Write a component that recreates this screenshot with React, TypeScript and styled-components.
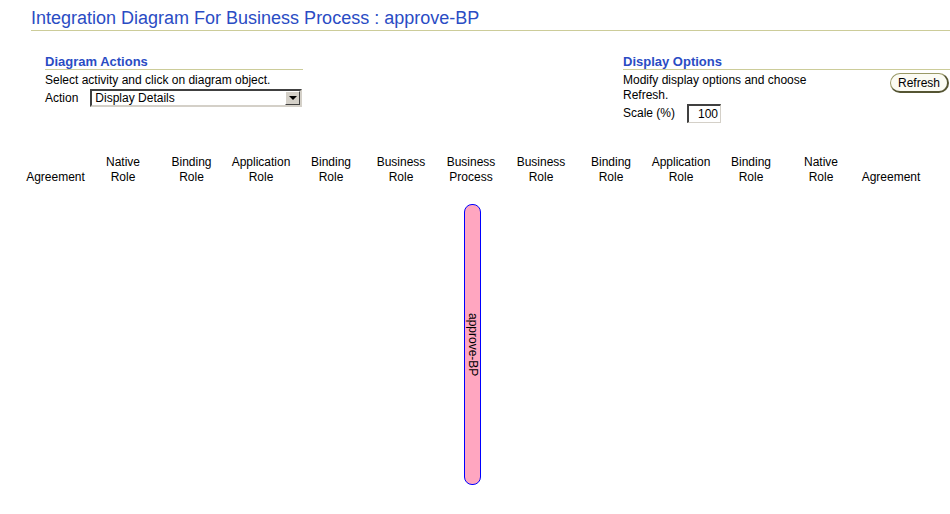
import styled, { createGlobalStyle } from 'styled-components';

const GlobalStyle = createGlobalStyle`
	html, body {
		margin: 0;
		padding: 0;
		background: #ffffff;
	}
	body {
		font-family: 'Liberation Sans', Arial, sans-serif;
		font-size: 12px;
		color: #000000;
	}
`;

const columns = [
	{ top: '', bottom: 'Agreement', width: 67 },
	{ top: 'Native', bottom: 'Role', width: 68 },
	{ top: 'Binding', bottom: 'Role', width: 69 },
	{ top: 'Application', bottom: 'Role', width: 70 },
	{ top: 'Binding', bottom: 'Role', width: 70 },
	{ top: 'Business', bottom: 'Role', width: 70 },
	{ top: 'Business', bottom: 'Process', width: 70, process: 'approve-BP' },
	{ top: 'Business', bottom: 'Role', width: 70 },
	{ top: 'Binding', bottom: 'Role', width: 70 },
	{ top: 'Application', bottom: 'Role', width: 70 },
	{ top: 'Binding', bottom: 'Role', width: 70 },
	{ top: 'Native', bottom: 'Role', width: 70 },
	{ top: '', bottom: 'Agreement', width: 70 },
];

const Page = styled.div`
	width: 950px;
	padding-top: 9px;
`;

const PageTitle = styled.h1`
	margin: 0 0 0 31px;
	padding-bottom: 2px;
	font-size: 18px;
	font-weight: normal;
	line-height: 19px;
	color: #2a4cc4;
	border-bottom: 1px solid #cccc99;
`;

const OptionsRow = styled.div`
	display: flex;
	justify-content: space-between;
	margin-top: 23px;
	padding-left: 45px;
`;

const Section = styled.div<{ $width: number }>`
	width: ${({ $width }) => $width}px;
`;

const SectionHeader = styled.h2`
	margin: 0;
	font-size: 13px;
	font-weight: bold;
	line-height: 15px;
	color: #2a4cc4;
	border-bottom: 1px solid #cccc99;
`;

const HelpText = styled.div`
	margin-top: 3px;
	line-height: 15px;
`;

const FieldRow = styled.div`
	display: flex;
	align-items: center;
	gap: 12px;
	margin-top: 1px;
`;

const Label = styled.span`
	line-height: 15px;
`;

const SelectBox = styled.div`
	display: flex;
	align-items: center;
	width: 208px;
	height: 14px;
	border: 2px solid;
	border-color: #404040 #d4d0c8 #d4d0c8 #404040;
	background: #ffffff;
`;

const SelectValue = styled.span`
	flex: 1;
	padding-left: 3px;
`;

const SelectArrow = styled.span`
	display: flex;
	align-items: center;
	justify-content: center;
	width: 15px;
	height: 14px;
	box-sizing: border-box;
	background: #d4d0c8;
	border: 1px solid;
	border-color: #ffffff #404040 #404040 #ffffff;
	&::after {
		content: '';
		border-left: 4px solid transparent;
		border-right: 4px solid transparent;
		border-top: 4px solid #000000;
	}
`;

const DisplayBody = styled.div`
	display: flex;
	justify-content: space-between;
	align-items: flex-start;
`;

const ScaleInput = styled.div`
	width: 29px;
	height: 16px;
	padding-right: 2px;
	text-align: right;
	line-height: 16px;
	border: 1px solid;
	border-left-width: 2px;
	border-top-width: 2px;
	border-color: #404040 #d4d0c8 #d4d0c8 #404040;
`;

const RefreshButton = styled.button`
	margin-top: 3px;
	margin-right: 1px;
	height: 20px;
	padding: 0 7px;
	font-family: 'Liberation Sans', Arial, sans-serif;
	font-size: 12px;
	color: #000000;
	background: #fbfbf3;
	border: 1px solid #999966;
	border-right: 2px solid #555533;
	border-bottom: 2px solid #555533;
	border-radius: 10px;
`;

const Diagram = styled.div`
	display: flex;
	margin-top: 32px;
	padding-left: 22px;
`;

const Column = styled.div<{ $width: number }>`
	display: flex;
	flex-direction: column;
	align-items: center;
	width: ${({ $width }) => $width}px;
`;

const ColumnHeading = styled.div`
	height: 30px;
	display: flex;
	flex-direction: column;
	justify-content: flex-end;
	text-align: center;
	line-height: 15px;
	white-space: nowrap;
`;

const ProcessBar = styled.div`
	margin-top: 19px;
	margin-left: 3px;
	width: 15px;
	height: 279px;
	display: flex;
	align-items: center;
	justify-content: center;
	background: #ffa6c0;
	border: 1px solid #0000ff;
	border-radius: 8px;
	writing-mode: vertical-rl;
	font-size: 12px;
	line-height: 15px;
`;

const App = () => {
	return (
		<>
			<GlobalStyle />
			<Page>
				<PageTitle>Integration Diagram For Business Process : approve-BP</PageTitle>

				<OptionsRow>
					<Section $width={258}>
						<SectionHeader>Diagram Actions</SectionHeader>
						<HelpText>Select activity and click on diagram object.</HelpText>
						<FieldRow>
							<Label>Action</Label>
							<SelectBox>
								<SelectValue>Display Details</SelectValue>
								<SelectArrow />
							</SelectBox>
						</FieldRow>
					</Section>

					<Section $width={327}>
						<SectionHeader>Display Options</SectionHeader>
						<DisplayBody>
							<div>
								<HelpText>
									Modify display options and choose
									<br />
									Refresh.
								</HelpText>
								<FieldRow>
									<Label>Scale (%)</Label>
									<ScaleInput>100</ScaleInput>
								</FieldRow>
							</div>
							<RefreshButton>Refresh</RefreshButton>
						</DisplayBody>
					</Section>
				</OptionsRow>

				<Diagram>
					{columns.map((col, i) => (
						<Column key={i} $width={col.width}>
							<ColumnHeading>
								<span>{col.top}</span>
								<span>{col.bottom}</span>
							</ColumnHeading>
							{col.process && <ProcessBar>{col.process}</ProcessBar>}
						</Column>
					))}
				</Diagram>
			</Page>
		</>
	);
};

export default App;
